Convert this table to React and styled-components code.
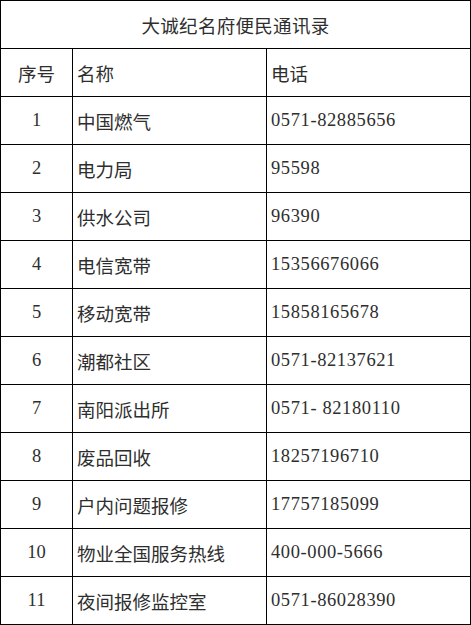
import React from "react";
import styled, { createGlobalStyle } from "styled-components";

const GlobalStyle = createGlobalStyle`
  html, body {
    margin: 0;
    padding: 0;
    background: #fff;
  }
`;

const Sheet = styled.table`
  width: 471px;
  border-collapse: collapse;
  table-layout: fixed;
  font-family: "Liberation Serif", "Noto Sans CJK SC", serif;
  font-size: 18.5px;
  color: #2e2e2e;

  td,
  th {
    height: 47px;
    border: 1px solid #000;
    padding: 0 4px;
    font-weight: normal;
    white-space: nowrap;
  }
`;

const Title = styled.th`
  text-align: center;
  letter-spacing: 0.3px;
`;

const Cell = styled.td`
  text-align: ${(p) => (p.center ? "center" : "left")};
`;

const Phone = styled(Cell)`
  letter-spacing: 0.6px;
`;

const contacts = [
  ["中国燃气", "0571-82885656"],
  ["电力局", "95598"],
  ["供水公司", "96390"],
  ["电信宽带", "15356676066"],
  ["移动宽带", "15858165678"],
  ["潮都社区", "0571-82137621"],
  ["南阳派出所", "0571- 82180110"],
  ["废品回收", "18257196710"],
  ["户内问题报修", "17757185099"],
  ["物业全国服务热线", "400-000-5666"],
  ["夜间报修监控室", "0571-86028390"],
];

const App = () => {
  return (
    <>
      <GlobalStyle />
      <Sheet>
        <colgroup>
          <col style={{ width: 72 }} />
          <col style={{ width: 194 }} />
          <col style={{ width: 204 }} />
        </colgroup>
        <thead>
          <tr>
            <Title colSpan={3}>大诚纪名府便民通讯录</Title>
          </tr>
        </thead>
        <tbody>
          <tr>
            <Cell center>序号</Cell>
            <Cell>名称</Cell>
            <Cell>电话</Cell>
          </tr>
          {contacts.map(([name, tel], i) => (
            <tr key={name}>
              <Cell center>{i + 1}</Cell>
              <Cell>{name}</Cell>
              <Phone>{tel}</Phone>
            </tr>
          ))}
        </tbody>
      </Sheet>
    </>
  );
};

export default App;
